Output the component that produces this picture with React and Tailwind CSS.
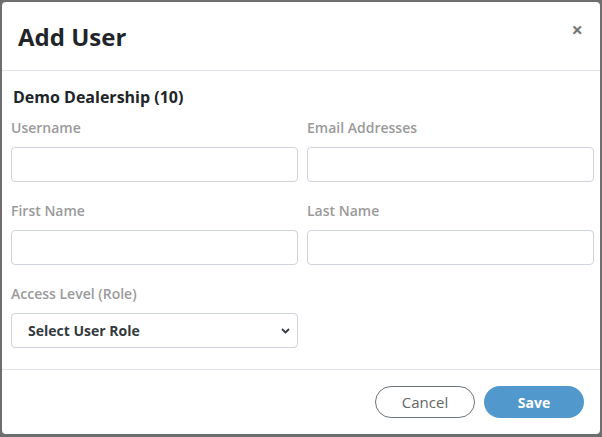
import React from "react";

const Field = ({ label }) => (
  <div className="flex flex-col">
    <label className="text-[14px] font-semibold leading-[20px] text-[#9a9a9a] mb-[9px]">{label}</label>
    <input className="h-[35px] w-full rounded-[4px] border border-[#ced4da] bg-white px-3 outline-none" />
  </div>
);

export default function App() {
  return (
    <div className="h-[437px] w-[602px] bg-[#6e6e6e] p-[2px] pb-[3px]" style={{ fontFamily: '"Open Sans", sans-serif' }}>
      <div className="flex h-full flex-col rounded-[4px] bg-white">
        {/* header */}
        <div className="flex h-[69px] items-start justify-between border-b border-[#dee2e6] pl-[16px] pr-[17px]">
          <h1 className="mt-[19px] text-[24px] font-bold leading-[32px] text-[#212529]">Add User</h1>
          <button className="mt-[18px] text-[20px] font-bold leading-[20px] text-[#777]">×</button>
        </div>

        {/* body */}
        <div className="flex-1 pl-[9px] pr-[6px] pt-[15px]">
          <h2 className="pl-[2px] text-[16px] font-bold leading-[22px] text-[#212529]">Demo Dealership (10)</h2>
          <div className="mt-[10px] grid grid-cols-2 gap-x-[9px] gap-y-[19px]">
            <Field label="Username" />
            <Field label="Email Addresses" />
            <Field label="First Name" />
            <Field label="Last Name" />
            <div className="flex flex-col">
              <label className="text-[14px] font-semibold leading-[20px] text-[#9a9a9a] mb-[9px]">Access Level (Role)</label>
              <div className="relative h-[35px] rounded-[4px] border border-[#ced4da] bg-white">
                <span className="absolute left-[16px] top-[7px] text-[14px] font-bold leading-[20px] text-[#343a40]">Select User Role</span>
                <svg className="absolute right-[7px] top-[14px]" width="9" height="6" viewBox="0 0 9 6">
                  <path d="M1 1l3.5 3.5L8 1" fill="none" stroke="#343a40" strokeWidth="1.8" />
                </svg>
              </div>
            </div>
          </div>
        </div>

        {/* footer */}
        <div className="flex h-[65px] items-start justify-end gap-[9px] border-t border-[#dee2e6] pr-[16px] pt-[16px]">
          <button className="h-[32px] w-[100px] rounded-full border border-[#6c757d] bg-white text-[15px] font-medium text-[#666]">Cancel</button>
          <button className="h-[32px] w-[100px] rounded-full bg-[#5199cc] text-[14px] font-bold text-white">Save</button>
        </div>
      </div>
    </div>
  );
}
